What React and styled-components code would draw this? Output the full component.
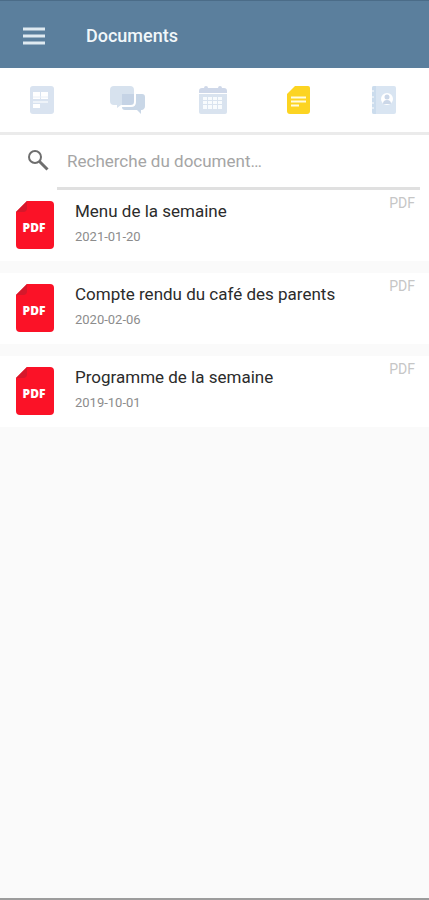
import React, { useState } from "react";
import styled, { createGlobalStyle } from "styled-components";

const GlobalStyle = createGlobalStyle`
  *, *::before, *::after { box-sizing: border-box; }
  body {
    margin: 0;
    background: #fafafa;
    font-family: Roboto, "Liberation Sans", sans-serif;
  }
`;

const Screen = styled.div`
  display: flex;
  flex-direction: column;
  min-height: 100vh;
  border-bottom: 2px solid #9c9c9c;
`;

const AppBar = styled.header`
  display: flex;
  align-items: center;
  gap: 40px;
  height: 68px;
  padding: 2px 22px 0;
  background: #5b7f9d;
  border-top: 1px solid #4b6c88;
`;

const MenuButton = styled.button`
  display: flex;
  padding: 0;
  border: 0;
  background: none;
  cursor: pointer;
`;

const PageTitle = styled.h1`
  margin: 0;
  color: #f1f7fa;
  font-size: 18px;
  line-height: 24px;
  font-weight: 500;
`;

const TabBar = styled.nav`
  display: grid;
  grid-template-columns: repeat(5, 1fr);
  height: 67px;
  padding-right: 2px;
  background: #fff;
  border-bottom: 3px solid #ebebeb;
`;

const Tab = styled.button`
  display: flex;
  align-items: center;
  justify-content: center;
  padding: 0;
  border: 0;
  background: none;
  color: ${({ $active }) => ($active ? "#fcd422" : "#d9e3f0")};
  cursor: pointer;
`;

const SearchBar = styled.label`
  display: flex;
  height: 55px;
  padding: 0 9px 0 27px;
  background: #fff;
`;

const SearchIcon = styled.span`
  display: flex;
  flex: 0 0 30px;
  padding-top: 14px;
`;

const SearchInput = styled.input`
  flex: 1;
  min-width: 0;
  padding: 0 10px;
  border: 0;
  border-bottom: 3px solid #e0e0e0;
  outline: 0;
  background: none;
  color: #333;
  font: 400 17px/20px Roboto, "Liberation Sans", sans-serif;
  &::placeholder { color: #a5a5a5; opacity: 1; }
`;

const DocumentList = styled.ul`
  display: flex;
  flex-direction: column;
  gap: 12px;
  margin: 0;
  padding: 0;
  list-style: none;
`;

const DocumentRow = styled.li`
  display: flex;
  height: 71px;
  padding: 0 14px 0 16px;
  background: #fff;
`;

const FileIcon = styled.svg`
  flex: none;
  margin-top: 11px;
`;

const DocumentText = styled.div`
  flex: 1;
  min-width: 0;
  padding: 9px 0 0 21px;
`;

const DocumentTitle = styled.h2`
  margin: 0;
  color: #2b2b2b;
  font-size: 17px;
  line-height: 24px;
  font-weight: 400;
`;

const DocumentDate = styled.time`
  display: block;
  margin-top: 5px;
  color: #8c8c8c;
  font-size: 13px;
  line-height: 18px;
`;

const FileType = styled.span`
  padding-top: 3px;
  color: #c6c6c6;
  font-size: 14px;
  line-height: 20px;
`;

const NewsIcon = () => (
  <svg width="26" height="28" viewBox="0 0 26 28" aria-hidden="true">
    <rect x="0" y="0" width="24" height="28" rx="3" fill="#d9e3f0" />
    <rect x="3" y="6" width="7" height="7" fill="#fff" />
    <rect x="11" y="6" width="7" height="7" fill="#fff" />
    <rect x="3" y="15" width="15" height="2" fill="#eef3f9" />
    <rect x="3" y="18" width="7" height="4" fill="#fff" />
    <path d="M3 11h15" stroke="#eaf0f7" />
  </svg>
);

const ChatIcon = () => (
  <svg width="36" height="28" viewBox="0 0 36 28" aria-hidden="true">
    <path d="M15 8h17q3 0 3 3v9q0 3-3 4h-1v4l-4-4H15q-3 0-3-3V11q0-3 3-3z" fill="#c9d7e7" />
    <path d="M4 0h16q4 0 4 4v11q0 4-4 4h-9l-4 3v-3H4q-4 0-4-4V4q0-4 4-4z" fill="#d7e2ee" />
    <path d="M12 8h12v7q0 4-4 4h-8z" fill="#c5d3e5" />
    <path d="M25 7v9q0 4-4 4h-9" fill="none" stroke="#fff" strokeWidth="2" />
  </svg>
);

const CalendarIcon = () => (
  <svg width="28" height="28" viewBox="0 0 28 28" aria-hidden="true">
    <path d="M0 7V5q0-3 3-3h2q0-2 2-2t2 2h10q0-2 2-2t2 2h2q3 0 3 3v2z" fill="#cfd8e9" />
    <path d="M0 8h28v18q0 2-2 2H2q-2 0-2-2z" fill="#d9e3ef" />
    <path
      d="M4 11h4v3H4zM9 11h4v3H9zM14 11h4v3h-4zM19 11h4v3h-4zM4 15h4v3H4zM9 15h4v3H9zM14 15h4v3h-4zM19 15h4v3h-4zM4 19h4v4H4zM9 19h4v4H9zM14 19h4v4h-4zM19 19h4v4h-4z"
      fill="#f8fbfd"
    />
  </svg>
);

const NoteIcon = () => (
  <svg width="24" height="28" viewBox="0 0 24 28" aria-hidden="true">
    <path d="M8 0h13q2 0 2 2v23q0 3-3 3H3q-3 0-3-3V8z" fill="currentColor" />
    <path d="M4 11.500h15M4 15.500h15M4 19.500h8" stroke="#fffbe0" strokeWidth="2" />
  </svg>
);

const ContactsIcon = () => (
  <svg width="24" height="28" viewBox="0 0 24 28" aria-hidden="true">
    <rect x="0" y="0" width="24" height="28" rx="2" fill="#d9e5f2" />
    <path d="M2 0h2v28H2q-2 0-2-2V2q0-2 2-2z" fill="#cbdced" />
    <path d="M0 5h2M0 11h2M0 17h2M0 22h2" stroke="#fff" />
    <circle cx="15" cy="13" r="6" fill="#fff" />
    <circle cx="15" cy="11" r="2.500" fill="#cbd7e8" />
    <path d="M11 18q0-4 4-4t4 4z" fill="#cbd7e8" />
  </svg>
);

const PdfIcon = () => (
  <FileIcon width="38" height="48" viewBox="0 0 38 48" role="img" aria-label="PDF">
    <path d="M11 0h23q4 0 4 4v40q0 4-4 4H4q-4 0-4-4V11z" fill="#fb1227" />
    <path d="M11 0v7q0 4-4 4H0z" fill="#d5182b" />
    <text
      x="18"
      y="31"
      fill="#fff"
      textAnchor="middle"
      fontFamily="'Open Sans', sans-serif"
      fontSize="12"
      fontWeight="800"
    >
      PDF
    </text>
  </FileIcon>
);

const tabs = [
  { id: "news", label: "Actualités", Icon: NewsIcon },
  { id: "messages", label: "Messages", Icon: ChatIcon },
  { id: "calendar", label: "Calendrier", Icon: CalendarIcon },
  { id: "documents", label: "Documents", Icon: NoteIcon },
  { id: "contacts", label: "Contacts", Icon: ContactsIcon },
];

const documents = [
  { title: "Menu de la semaine", date: "2021-01-20" },
  { title: "Compte rendu du café des parents", date: "2020-02-06" },
  { title: "Programme de la semaine", date: "2019-10-01" },
];

export default function App() {
  const [query, setQuery] = useState("");
  const visible = documents.filter((d) =>
    d.title.toLowerCase().includes(query.toLowerCase())
  );

  return (
    <>
      <GlobalStyle />
      <Screen>
        <AppBar>
          <MenuButton aria-label="Menu">
            <svg width="24" height="18" viewBox="0 0 24 18" aria-hidden="true">
              <path d="M1 2h22M1 9h22M1 16h22" stroke="#dfeaf1" strokeWidth="3" />
            </svg>
          </MenuButton>
          <PageTitle>Documents</PageTitle>
        </AppBar>
        <TabBar>
          {tabs.map(({ id, label, Icon }) => (
            <Tab
              key={id}
              $active={id === "documents"}
              aria-label={label}
              aria-current={id === "documents" ? "page" : undefined}
            >
              <Icon />
            </Tab>
          ))}
        </TabBar>
        <SearchBar>
          <SearchIcon>
            <svg width="22" height="22" viewBox="0 0 22 22" aria-hidden="true">
              <circle cx="8" cy="8" r="6" fill="none" stroke="#6e6e6e" strokeWidth="2" />
              <path d="M12.500 12.500L20.500 20.500" stroke="#6e6e6e" strokeWidth="3" />
            </svg>
          </SearchIcon>
          <SearchInput
            type="text"
            aria-label="Recherche du document"
            placeholder="Recherche du document…"
            value={query}
            onChange={(e) => setQuery(e.target.value)}
          />
        </SearchBar>
        <DocumentList>
          {visible.map(({ title, date }) => (
            <DocumentRow key={title}>
              <PdfIcon />
              <DocumentText>
                <DocumentTitle>{title}</DocumentTitle>
                <DocumentDate dateTime={date}>{date}</DocumentDate>
              </DocumentText>
              <FileType>PDF</FileType>
            </DocumentRow>
          ))}
        </DocumentList>
      </Screen>
    </>
  );
}
